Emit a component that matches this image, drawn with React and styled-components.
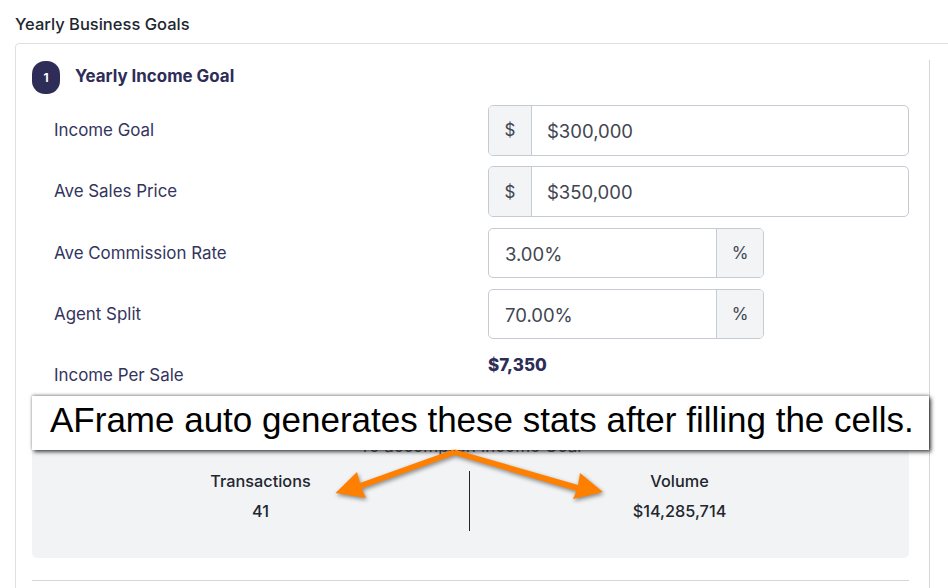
import React from "react";
import styled, { createGlobalStyle } from "styled-components";

const GlobalStyle = createGlobalStyle`
  html, body {
    margin: 0;
    padding: 0;
    width: 948px;
    height: 588px;
    overflow: hidden;
    background: #fff;
  }
  body {
    font-family: "Inter", "Liberation Sans", sans-serif;
  }
`;

const Page = styled.div`
  position: relative;
  width: 948px;
  height: 588px;
  overflow: hidden;
  padding: 14px 0 0 15px;
  box-sizing: border-box;
`;

const PageTitle = styled.h2`
  margin: 0;
  font-size: 16.5px;
  line-height: 20px;
  font-weight: 500;
  color: #22272f;
  height: 29px;
`;

const Card = styled.div`
  width: 1000px;
  height: 600px;
  border: 1px solid #dfe0e2;
  border-radius: 4px;
  box-sizing: border-box;
  padding-top: 16px;
`;

const Panel = styled.div`
  width: 914px;
  height: 600px;
  box-sizing: border-box;
  border-right: 1px solid #d4d5d8;
  padding: 1px 20px 0 16px;
`;

const StepHeader = styled.div`
  display: flex;
  align-items: flex-start;
  gap: 15px;
  height: 44px;
`;

const StepBadge = styled.div`
  width: 28px;
  height: 33px;
  border-radius: 13px;
  background: #2d2d58;
  color: #fff;
  font-size: 12px;
  font-weight: 700;
  display: flex;
  align-items: center;
  justify-content: center;
`;

const StepTitle = styled.h3`
  margin: 3px 0 0;
  font-size: 16.9px;
  line-height: 24px;
  font-weight: 700;
  color: #2d2d58;
`;

const Row = styled.div`
  display: grid;
  grid-template-columns: 434px 1fr;
  height: ${(p) => p.$height || 61.3}px;
  padding-left: 22px;
`;

const Label = styled.div`
  font-size: 16.9px;
  line-height: 50px;
  color: #33345e;
`;

const InputGroup = styled.div`
  display: flex;
  width: ${(p) => (p.$short ? 276 : 421)}px;
  height: 50.5px;
  box-sizing: border-box;
  border: 1px solid #c6cad2;
  border-radius: 5px;
  overflow: hidden;
`;

const Addon = styled.div`
  width: ${(p) => (p.$end ? 47 : 43)}px;
  flex: none;
  background: #f3f4f6;
  color: #3f4650;
  font-size: 17px;
  display: flex;
  align-items: center;
  justify-content: center;
  box-sizing: border-box;
  border-${(p) => (p.$end ? "left" : "right")}: 1px solid #c6cad2;
`;

const Value = styled.div`
  flex: 1;
  padding-left: ${(p) => p.$pad}px;
  font-size: 18.5px;
  line-height: 50px;
  color: #3f4650;
`;

const Computed = styled.div`
  font-size: 17px;
  line-height: 22px;
  font-weight: 800;
  color: #2d2d58;
  padding-top: 4px;
`;

const StatsBox = styled.div`
  margin-top: 6px;
  height: 152px;
  box-sizing: border-box;
  background: #f2f3f5;
  border-radius: 5px;
  padding: 0 20px;
`;

const StatsCaption = styled.div`
  padding-top: 30px;
  height: 65px;
  box-sizing: border-box;
  text-align: center;
  font-size: 17px;
  line-height: 20px;
  color: #5b606a;
`;

const StatsGrid = styled.div`
  display: grid;
  grid-template-columns: 417px 1fr;
`;

const Stat = styled.div`
  height: 60px;
  text-align: center;
  color: #22272f;
  font-size: 16.3px;
  font-weight: 500;
  & + & {
    border-left: 1px solid #22272f;
  }
`;

const StatLabel = styled.div`
  line-height: 20px;
  margin-bottom: 10px;
`;

const StatValue = styled.div`
  line-height: 20px;
`;

const Divider = styled.hr`
  margin: 22px 0 0;
  border: 0;
  border-top: 1px solid #d6d7da;
`;

const Callout = styled.div`
  position: absolute;
  left: 32px;
  top: 396px;
  width: 897px;
  height: 54px;
  background: #fff;
  box-shadow: 2px 2px 4px rgba(0, 0, 0, 0.7), 0 -1px 3px rgba(0, 0, 0, 0.35);
  font-family: "Liberation Sans", Arial, sans-serif;
  font-size: 35px;
  line-height: 48px;
  color: #000;
  padding-left: 18px;
  box-sizing: border-box;
  white-space: nowrap;
`;

const ArrowLayer = styled.svg`
  position: absolute;
  left: 0;
  top: 0;
  width: 948px;
  height: 588px;
  pointer-events: none;
  filter: drop-shadow(1px 2px 2px rgba(0, 0, 0, 0.45));
`;

const rows = [
  { label: "Income Goal", before: "$", value: "$300,000" },
  { label: "Ave Sales Price", before: "$", value: "$350,000" },
  { label: "Ave Commission Rate", after: "%", value: "3.00%" },
  { label: "Agent Split", after: "%", value: "70.00%" },
];

export default function App() {
  return (
    <Page>
      <GlobalStyle />
      <PageTitle>Yearly Business Goals</PageTitle>
      <Card>
        <Panel>
          <StepHeader>
            <StepBadge>1</StepBadge>
            <StepTitle>Yearly Income Goal</StepTitle>
          </StepHeader>
          {rows.map((r) => (
            <Row key={r.label}>
              <Label>{r.label}</Label>
              <InputGroup $short={!!r.after}>
                {r.before && <Addon>{r.before}</Addon>}
                <Value $pad={r.before ? 15 : 16}>{r.value}</Value>
                {r.after && <Addon $end>{r.after}</Addon>}
              </InputGroup>
            </Row>
          ))}
          <Row $height={50}>
            <Label>Income Per Sale</Label>
            <Computed>$7,350</Computed>
          </Row>
          <StatsBox>
            <StatsCaption>To accomplish Income Goal</StatsCaption>
            <StatsGrid>
              <Stat>
                <StatLabel>Transactions</StatLabel>
                <StatValue>41</StatValue>
              </Stat>
              <Stat>
                <StatLabel>Volume</StatLabel>
                <StatValue>$14,285,714</StatValue>
              </Stat>
            </StatsGrid>
          </StatsBox>
          <Divider />
        </Panel>
      </Card>
      <Callout>AFrame auto generates these stats after filling the cells.</Callout>
      <ArrowLayer viewBox="0 0 948 588">
        <polygon
          fill="#ff8000"
          points="453.5,449.5 456,454.5 361.5,488.5 366,498 335.5,493 357,472 360,483"
        />
        <polygon
          fill="#ff8000"
          points="455,449.5 453,454.5 576.5,491 573,499 603,492 580,473 578,485"
        />
      </ArrowLayer>
    </Page>
  );
}
